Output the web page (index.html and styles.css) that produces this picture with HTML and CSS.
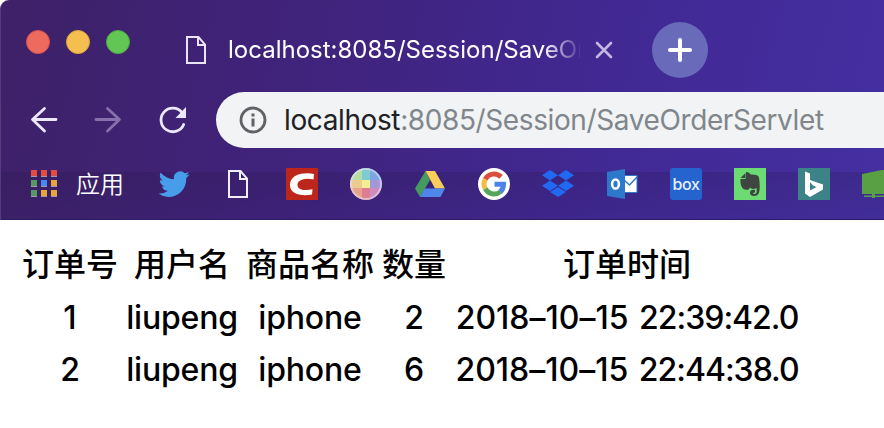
FILE: index.html
```html
<!DOCTYPE html>
<html lang="zh-CN">
<head>
<meta charset="utf-8">
<title>localhost:8085/Session/SaveOrderServlet</title>
<link rel="stylesheet" href="styles.css">
</head>
<body>
<header class="chrome">
  <div class="tabstrip">
    <div class="lights"><i class="light red"></i><i class="light yellow"></i><i class="light green"></i></div>
    <svg class="tab-icon" width="32" height="32" viewBox="0 0 32 32"><path d="M7 3H18.500L25 10.500V29H7ZM18 3V11H25" fill="none" stroke="#e9e4f8" stroke-width="2"/></svg>
    <span class="tab-title">localhost:8085/Session/SaveOrderServlet</span>
    <svg class="tab-close" width="20" height="20" viewBox="0 0 20 20"><path d="M3 3L17 17M17 3L3 17" stroke="#c3b8df" stroke-width="2.600" stroke-linecap="round"/></svg>
    <div class="new-tab"><svg width="28" height="28" viewBox="0 0 28 28"><path d="M14 4V24M4 14H24" stroke="#fff" stroke-width="4" stroke-linecap="round"/></svg></div>
  </div>
  <nav class="toolbar">
    <svg class="nav" width="32" height="32" viewBox="0 0 32 32"><path d="M28 15.500H5M16.500 4.500L4.500 15.500L16.500 27" fill="none" stroke="#ece7fc" stroke-width="2.800" stroke-linecap="round" stroke-linejoin="round"/></svg>
    <svg class="nav forward" width="32" height="32" viewBox="0 0 32 32"><path d="M4 15.500H27M15.500 4.500L27.500 15.500L15.500 27" fill="none" stroke="#8671ac" stroke-width="2.800" stroke-linecap="round" stroke-linejoin="round"/></svg>
    <svg class="nav reload" width="32" height="32" viewBox="0 0 32 32"><path d="M25 8.500A11.800 11.800 0 1 0 26.700 20.500" fill="none" stroke="#ece7fc" stroke-width="2.800" stroke-linecap="round"/><path d="M29 3V14H18.500Z" fill="#ece7fc"/></svg>
    <div class="omnibox">
      <svg width="28" height="28" viewBox="0 0 28 28"><circle cx="14" cy="14" r="12" fill="none" stroke="#606266" stroke-width="2.800"/><path d="M12.500 7.500h3v3h-3zM12.500 12.500h3v8h-3z" fill="#606266"/></svg>
      <span class="url"><b>localhost</b>:8085/Session/SaveOrderServlet</span>
    </div>
  </nav>
  <div class="bookmarks">
    <svg class="apps" width="28" height="28" viewBox="0 0 28 28">
      <path fill="#a096b4" d="M1 2h6v6H1zM11 2h6v6h-6zM21 2h6v6h-6zM1 12h6v6H1zM11 12h6v6h-6zM21 12h6v6h-6zM1 22h6v6H1zM11 22h6v6h-6zM21 22h6v6h-6z"/>
      <path fill="#e54b3f" d="M1 1h6v6H1zM11 1h6v6h-6zM21 1h6v6h-6z"/><path fill="#549a60" d="M1 11h6v6H1zM1 21h6v6H1z"/><path fill="#438bf0" d="M11 11h6v6h-6z"/><path fill="#e8a53a" d="M21 11h6v6h-6zM11 21h6v6h-6zM21 21h6v6h-6z"/>
    </svg>
    <span class="apps-label">应用</span>
    <div class="icons">
      <svg width="32" height="32" viewBox="0 0 32 32"><path fill="#489dea" d="M31.500 6.200a12 12 0 0 1-3.500 1.100 6 6 0 0 0 2.700-3.500 12 12 0 0 1-3.900 1.500A6.400 6.400 0 0 0 16 11.200C10.600 11 6 8.400 2.700 4.400A6.300 6.300 0 0 0 4.700 12.800 6 6 0 0 1 1.800 12c0 3 2.100 5.600 5 6.300q-1.300.4-2.800.1a6.300 6.300 0 0 0 5.900 4.400A13 13 0 0 1 .4 25.500 18 18 0 0 0 10.100 29C21 29 28.600 20.500 28.300 10.100A12 12 0 0 0 31.500 6.200z"/></svg>
      <svg width="32" height="32" viewBox="0 0 32 32"><path d="M7 3H18.500L25 10.500V29H7ZM18 3V11H25" fill="none" stroke="#f0edf6" stroke-width="2"/></svg>
      <svg width="32" height="32" viewBox="0 0 32 32"><path fill="#bd271b" d="M0 0h32v32H0z"/><path fill="#fff" d="M28 6L27.500 11.500Q23 10.500 19 11C14.500 11.500 11.500 13.500 11.500 17 11.500 20.500 15 22 19 22Q23 22.200 26.500 21.200L26 26.500Q19 28 13 26.500C7.500 25.300 4 22 4 17 4 10 10 6 18 5.500Q23 5 28 6z"/></svg>
      <svg width="32" height="32" viewBox="0 0 32 32"><defs><clipPath id="ball"><circle cx="16" cy="16" r="16"/></clipPath></defs><g clip-path="url(#ball)"><path fill="#b7dda5" d="M0 0h12v12H0z"/><path fill="#7dcbd3" d="M12 0h8v12h-8z"/><path fill="#7da5e3" d="M20 0h12v12H20z"/><path fill="#eccb91" d="M0 12h12v8H0z"/><path fill="#f3ee91" d="M12 12h8v8h-8z"/><path fill="#a497d8" d="M20 12h12v8H20z"/><path fill="#e8a38a" d="M0 20h12v12H0z"/><path fill="#de7d91" d="M12 20h8v12h-8z"/><path fill="#cd8cbc" d="M20 20h12v12H20z"/></g><circle cx="16" cy="16" r="15" fill="none" stroke="#e6e1ee" stroke-width="2" opacity=".6"/></svg>
      <svg width="32" height="32" viewBox="0 0 32 32"><path fill="#459a5d" d="M11.500 3L16 12 6 29 1 20.500z"/><path fill="#fbcd5a" d="M11.500 3H21L31 20.500H21z"/><path fill="#4e86ea" d="M10.500 20.500H31L26.500 29H6z"/></svg>
      <svg width="32" height="32" viewBox="0 0 32 32"><circle cx="16" cy="16" r="16" fill="#fff"/><g fill="none" stroke-width="5"><path stroke="#da4e3e" d="M7.200 11.200A10 10 0 0 1 23 8.900"/><path stroke="#f3bd42" d="M7.300 20.800A10 10 0 0 1 7.200 11.200"/><path stroke="#55a65c" d="M22.700 23.500A10 10 0 0 1 7.300 20.800"/><path stroke="#4d83ea" d="M16.500 16.300H25.500C25.500 19.500 24.500 22 22.400 23.700"/></g></svg>
      <svg width="32" height="32" viewBox="0 0 32 32"><path fill="#2168f4" d="M8 2l8 5.200-8 5.200-8-5.200zM24 2l8 5.200-8 5.200-8-5.200zM8 12.500l8 5.200-8 5.200-8-5.200zM24 12.500l8 5.200-8 5.200-8-5.200zM16 19l8 5-8 5-8-5z"/></svg>
      <svg width="32" height="32" viewBox="0 0 32 32"><path fill="#fff" stroke="#2d78ca" d="M17 7.500h14v17H17z"/><path fill="none" stroke="#2d78ca" stroke-width="1.500" d="M18 12l5.500 5L31 9"/><path fill="#2d78ca" d="M1 4L19 1V31L1 28z"/><ellipse cx="9.500" cy="16" rx="3.400" ry="4.600" fill="none" stroke="#fff" stroke-width="2.500"/></svg>
      <span class="box-icon">box</span>
      <svg width="32" height="32" viewBox="0 0 32 32"><path fill="#6ddb73" d="M0 0h32v32H0z"/><path fill="#3f4541" d="M12 4C15 4 16 6 17 6.500 21 6.500 25 7 25 10Q26.500 19 25 24.500C24 29 16 29.200 16 25 16 22 18 21.500 21 22V24.500C18.500 24 18.500 26 20.500 26 23 26 23 23 22.500 20Q18 22 16 19.500 15 23 11 21.500C8 21 6 17 6.500 11H11Q12.500 10.500 12 8z"/><path fill="#3f4541" d="M6.500 10l5-5v5z"/></svg>
      <svg width="32" height="32" viewBox="0 0 32 32"><path fill="#3b8387" d="M0 0h32v32H0z"/><path fill="#fff" fill-rule="evenodd" d="M7 3.500l5 2v6.500L25 16.500v5L12 29l-5-3.500zM12 14v8.500L18.500 19 15 17.500z"/></svg>
      <svg width="32" height="32" viewBox="0 0 32 32"><path fill="#59a044" d="M0 6L20 2H32V26H0z"/><path fill="#412a97" d="M2 26h8v1.500H2zM13 26h9v1.500h-9z"/><path fill="#59a044" d="M10 25h3v5h-3zM2 27.500h30V29H2z"/></svg>
    </div>
  </div>
</header>
<main>
  <table>
    <colgroup><col class="c-id"><col class="c-user"><col class="c-name"><col class="c-qty"><col class="c-time"></colgroup>
    <tr><th>订单号</th><th>用户名</th><th>商品名称</th><th>数量</th><th>订单时间</th></tr>
    <tr><td>1</td><td class="user">liupeng</td><td class="name">iphone</td><td>2</td><td class="time"><span class="date">2018–10–15</span> <span class="clock">22:39:42.0</span></td></tr>
    <tr><td>2</td><td class="user">liupeng</td><td class="name">iphone</td><td>6</td><td class="time"><span class="date">2018–10–15</span> <span class="clock">22:44:38.0</span></td></tr>
  </table>
</main>
</body>
</html>
```
FILE: styles.css
```css
* { box-sizing: border-box; }
body { margin: 0; width: 884px; height: 428px; overflow: hidden; background: #fff; font-family: Inter, "Noto Sans CJK SC", sans-serif; }
svg { display: block; flex: none; }
.chrome { height: 220px; overflow: hidden; border-left: 1px solid #563a7b; border-top-left-radius: 9px; background: linear-gradient(105deg, #3e2167 0%, #40237c 35%, #412994 68%, #4530a2 100%); }
.tabstrip { display: flex; height: 92px; padding-left: 25px; align-items: flex-start; }
.lights { display: flex; gap: 16px; margin-top: 30px; width: 154px; }
.light { width: 24px; height: 24px; border-radius: 50%; }
.red { background: #ee6a5f; border: 1px solid #d9534b; }
.yellow { background: #f5bf4f; border: 1px solid #dba43b; }
.green { background: #62c655; border: 1px solid #4cab3f; }
.tab-icon { margin-top: 34px; }
.tab-title { width: 352px; margin: 34px 0 0 16px; overflow: hidden; white-space: nowrap; font-size: 24px; line-height: 32px; color: #fff; -webkit-mask-image: linear-gradient(90deg, #000 315px, transparent 355px); mask-image: linear-gradient(90deg, #000 315px, transparent 355px); }
.tab-close { margin: 40px 0 0 14px; }
.new-tab { display: flex; width: 56px; height: 56px; margin: 22px 0 0 38px; align-items: center; justify-content: center; border-radius: 50%; background: #696aba; }
.toolbar { display: flex; height: 56px; padding-left: 27px; align-items: center; }
.nav { margin-right: 32px; }
.forward { margin-right: 33px; }
.reload { margin-right: 27px; }
.omnibox { display: flex; flex: 1; height: 56px; padding-left: 23px; align-items: center; border-radius: 28px 0 0 28px; background: #f1f3f4; }
.url { margin-left: 17px; white-space: nowrap; font-size: 28px; line-height: 56px; letter-spacing: -.39px; color: #80868b; }
.url b { font-weight: 400; color: #202124; }
.bookmarks { display: flex; height: 72px; padding: 20px 0 0 29px; border-bottom: 1px solid #2d1b63; background: linear-gradient(transparent 24px, rgba(35, 20, 65, .22) 24px, rgba(35, 20, 80, .1)); }
.apps { margin-top: 1px; }
.apps-label { width: 48px; margin: -1px 0 0 18px; font: 350 24px/32px "Noto Sans CJK SC", sans-serif; color: #fff; white-space: nowrap; }
.icons { display: flex; gap: 32px; margin-left: 34px; }
.box-icon { flex: none; width: 32px; height: 32px; border-radius: 3px; background: #2563cf; color: #e5eefb; font-size: 16px; font-weight: 500; line-height: 32px; text-align: center; letter-spacing: -.3px; }
main { padding: 16px; }
table { table-layout: fixed; width: 790px; border-spacing: 4px; font-size: 32px; line-height: 44px; font-weight: 500; color: #000; font-feature-settings: "calt" 0; }
th, td { height: 48px; padding: 2px; text-align: center; white-space: nowrap; }
td { padding: 4px 2px 0; }
.user, .name { letter-spacing: -.2px; }
th { font-family: "Noto Sans CJK SC", sans-serif; font-weight: 500; line-height: 42px; padding: 1px 2px 5px; }
.date { letter-spacing: 0; }
.clock { margin-left: 2px; letter-spacing: -1px; }
.c-id { width: 100px; }
.c-user { width: 116px; }
.c-name { width: 132px; }
.c-qty { width: 68px; }
.c-time { width: 350px; }
```
